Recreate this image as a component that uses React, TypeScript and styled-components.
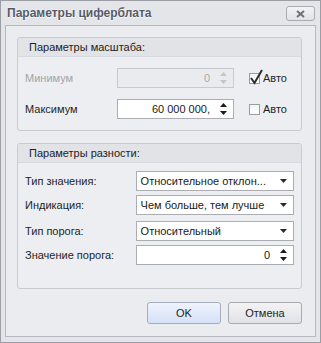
import React from 'react';
import styled, { createGlobalStyle } from 'styled-components';

const GlobalStyle = createGlobalStyle`
  html, body {
    margin: 0;
    padding: 0;
    background: #ffffff;
  }
  body {
    font-family: "Liberation Sans", Arial, sans-serif;
    font-size: 11px;
    color: #1f1f1f;
  }
`;

const Window = styled.div`
  width: 321px;
  height: 343px;
  box-sizing: border-box;
  border: 1px solid #9c9ea6;
  background: #e4e5e9;
  display: flex;
  flex-direction: column;
`;

const TitleBar = styled.div`
  height: 26px;
  display: flex;
  align-items: center;
  justify-content: space-between;
  padding: 0 5px 0 6px;
`;

const Title = styled.div`
  font-size: 12px;
  font-weight: bold;
  color: #565b68;
  text-shadow: 0 0 2px #ffffff, 0 1px 0 #f4f4f6;
`;

const CloseButton = styled.button`
  width: 29px;
  height: 15px;
  margin-top: 1px;
  padding: 0;
  border: 1px solid #a9abb2;
  border-radius: 3px;
  background: linear-gradient(#f3f3f5, #e2e3e7);
  display: flex;
  align-items: center;
  justify-content: center;
`;

const Content = styled.div`
  flex: 1;
  margin: 0 4px 5px 4px;
  border: 1px solid #b6b8be;
  background: #ebecef;
  padding: 11px 13px 12px 11px;
  display: flex;
  flex-direction: column;
`;

const Group = styled.div<{ $height: number; $gap?: number }>`
  height: ${(p) => p.$height}px;
  box-sizing: border-box;
  margin-top: ${(p) => p.$gap ?? 0}px;
  border: 1px solid #c9cbd0;
  border-radius: 3px;
  background: #eceef1;
  display: flex;
  flex-direction: column;
`;

const GroupHeader = styled.div`
  height: 18px;
  background: #e2e3e7;
  border-bottom: 1px solid #d8d9de;
  border-radius: 3px 3px 0 0;
  padding-left: 11px;
  display: flex;
  align-items: center;
  font-size: 11px;
  color: #222;
`;

const GroupBody = styled.div<{ $top: number }>`
  padding: ${(p) => p.$top}px 7px 0 7px;
  display: flex;
  flex-direction: column;
`;

const Row = styled.div<{ $gap?: number }>`
  height: 20px;
  margin-top: ${(p) => p.$gap ?? 0}px;
  display: flex;
  align-items: center;
`;

const Label = styled.div<{ $width: number; $disabled?: boolean }>`
  width: ${(p) => p.$width}px;
  color: ${(p) => (p.$disabled ? '#a3a4a8' : '#1f1f1f')};
`;

const Box = styled.div<{ $width: number; $disabled?: boolean }>`
  width: ${(p) => p.$width}px;
  height: 20px;
  box-sizing: border-box;
  border: 1px solid ${(p) => (p.$disabled ? '#c8cace' : '#abadb3')};
  background: ${(p) => (p.$disabled ? '#eaebee' : '#ffffff')};
  display: flex;
  align-items: center;
  color: ${(p) => (p.$disabled ? '#aaaaaa' : '#1a1a1a')};
`;

const SpinValue = styled.div`
  flex: 1;
  text-align: right;
  padding-right: 6px;
`;

const ComboValue = styled.div`
  flex: 1;
  padding-left: 4px;
  white-space: nowrap;
  overflow: hidden;
`;

const Arrows = styled.div`
  width: 14px;
  display: flex;
  flex-direction: column;
  align-items: center;
  gap: 4px;
  margin-right: 3px;
`;

const DropArrow = styled.div`
  width: 14px;
  display: flex;
  justify-content: center;
  margin-right: 3px;
`;

const CheckWrap = styled.label<{ $disabled?: boolean }>`
  margin-left: 15px;
  display: flex;
  align-items: center;
  gap: 3px;
  color: #1f1f1f;
`;

const CheckBox = styled.div`
  position: relative;
  width: 11px;
  height: 11px;
  box-sizing: border-box;
  border: 1px solid #9a9ca2;
  background: linear-gradient(#f4f4f4, #ffffff);
`;

const CheckMark = styled.svg`
  position: absolute;
  left: -1px;
  top: -5px;
`;

const Footer = styled.div`
  margin-top: 13px;
  display: flex;
  justify-content: flex-end;
  gap: 7px;
`;

const Button = styled.button<{ $primary?: boolean }>`
  width: 74px;
  height: 22px;
  padding: 0;
  border: 1px solid ${(p) => (p.$primary ? '#a4acbf' : '#a9abb2')};
  border-radius: 3px;
  font-family: inherit;
  font-size: 11px;
  color: #1f1f1f;
  background: ${(p) =>
    p.$primary
      ? 'linear-gradient(#eef3fd, #d5e1f8)'
      : 'linear-gradient(#f3f3f5, #e1e2e6)'};
`;

const Up = ({ color }: { color: string }) => (
  <svg width="7" height="4" viewBox="0 0 7 4">
    <polygon points="3.5,0 7,4 0,4" fill={color} />
  </svg>
);

const Down = ({ color }: { color: string }) => (
  <svg width="7" height="4" viewBox="0 0 7 4">
    <polygon points="0,0 7,0 3.5,4" fill={color} />
  </svg>
);

type SpinProps = { value: string; width: number; disabled?: boolean };

const Spin: React.FC<SpinProps> = ({ value, width, disabled }) => {
  const c = disabled ? '#c4c5c9' : '#1a1a1a';
  return (
    <Box $width={width} $disabled={disabled}>
      <SpinValue>{value}</SpinValue>
      <Arrows>
        <Up color={c} />
        <Down color={c} />
      </Arrows>
    </Box>
  );
};

const Combo: React.FC<{ value: string; width: number }> = ({ value, width }) => (
  <Box $width={width}>
    <ComboValue>{value}</ComboValue>
    <DropArrow>
      <Down color="#2a2a2a" />
    </DropArrow>
  </Box>
);

const Check: React.FC<{ checked?: boolean }> = ({ checked }) => (
  <CheckWrap>
    <CheckBox>
      {checked && (
        <CheckMark width="15" height="16" viewBox="0 0 15 16">
          <path d="M2 9 L5.5 14 L13 1" stroke="#2c2c2c" strokeWidth="2" fill="none" />
        </CheckMark>
      )}
    </CheckBox>
    Авто
  </CheckWrap>
);

export default function App() {
  return (
    <>
      <GlobalStyle />
      <Window>
        <TitleBar>
          <Title>Параметры циферблата</Title>
          <CloseButton>
            <svg width="9" height="8" viewBox="0 0 9 8">
              <path d="M1 1 L8 7 M8 1 L1 7" stroke="#6b6f79" strokeWidth="2" />
            </svg>
          </CloseButton>
        </TitleBar>
        <Content>
          <Group $height={94}>
            <GroupHeader>Параметры масштаба:</GroupHeader>
            <GroupBody $top={11}>
              <Row>
                <Label $width={92} $disabled>Минимум</Label>
                <Spin value="0" width={117} disabled />
                <Check checked />
              </Row>
              <Row $gap={11}>
                <Label $width={92}>Максимум</Label>
                <Spin value="60 000 000," width={117} />
                <Check />
              </Row>
            </GroupBody>
          </Group>
          <Group $height={146} $gap={12}>
            <GroupHeader>Параметры разности:</GroupHeader>
            <GroupBody $top={8}>
              <Row>
                <Label $width={111}>Тип значения:</Label>
                <Combo value="Относительное отклон..." width={159} />
              </Row>
              <Row $gap={4}>
                <Label $width={111}>Индикация:</Label>
                <Combo value="Чем больше, тем лучше" width={159} />
              </Row>
              <Row $gap={6}>
                <Label $width={111}>Тип порога:</Label>
                <Combo value="Относительный" width={159} />
              </Row>
              <Row $gap={4}>
                <Label $width={111}>Значение порога:</Label>
                <Spin value="0" width={159} />
              </Row>
            </GroupBody>
          </Group>
          <Footer>
            <Button $primary>OK</Button>
            <Button>Отмена</Button>
          </Footer>
        </Content>
      </Window>
    </>
  );
}
